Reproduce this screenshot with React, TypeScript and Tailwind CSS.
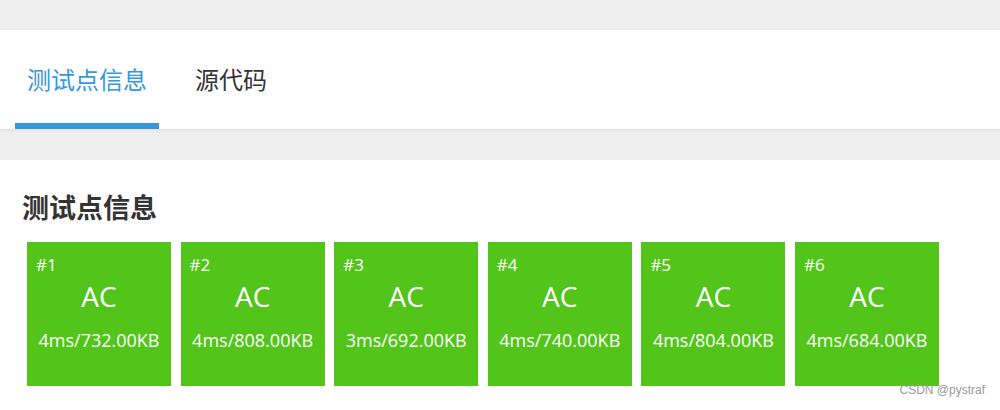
import React from "react";

const cases = [
  { id: 1, info: "4ms/732.00KB" },
  { id: 2, info: "4ms/808.00KB" },
  { id: 3, info: "3ms/692.00KB" },
  { id: 4, info: "4ms/740.00KB" },
  { id: 5, info: "4ms/804.00KB" },
  { id: 6, info: "4ms/684.00KB" },
];

const cjk = { fontFamily: '"Open Sans", "Noto Sans CJK SC", sans-serif' };

export default function App() {
  return (
    <div className="w-[1000px] h-[410px] bg-[#eeeeee] overflow-hidden relative" style={cjk}>
      <div className="h-[30px]" />
      <div className="bg-white h-[99px] flex items-stretch pl-[15px] shadow-[0_1px_3px_rgba(0,0,0,0.08)]">
        <div className="relative w-[144px] flex items-center pl-[12px] text-[24px] text-[#3498db]">
          测试点信息
          <div className="absolute left-0 right-0 bottom-0 h-[6px] bg-[#3498db]" />
        </div>
        <div className="flex items-center pl-[36px] text-[24px] text-[#333333]">源代码</div>
      </div>
      <div className="h-[31px]" />
      <div className="bg-white h-[250px] pl-[22px] pt-[30px]">
        <div className="text-[27px] font-bold text-[#333333] leading-[36px]">测试点信息</div>
        <div className="flex gap-[9.6px] mt-[16px] pl-[5px]">
          {cases.map((c) => (
            <div key={c.id} className="w-[144px] h-[144px] bg-[#52c41a] text-white flex flex-col">
              <div className="pl-[9px] pt-[12px] text-[17px] leading-[22px]">#{c.id}</div>
              <div className="text-center text-[28px] leading-[34px] mt-[3px]">AC</div>
              <div className="text-center text-[18px] leading-[22px] mt-[16px]">{c.info}</div>
            </div>
          ))}
        </div>
      </div>
      <div className="absolute right-[15px] bottom-[11px] text-[12px] text-[#999999]" style={{ fontFamily: '"Liberation Sans", sans-serif' }}>
        CSDN @pystraf
      </div>
    </div>
  );
}
